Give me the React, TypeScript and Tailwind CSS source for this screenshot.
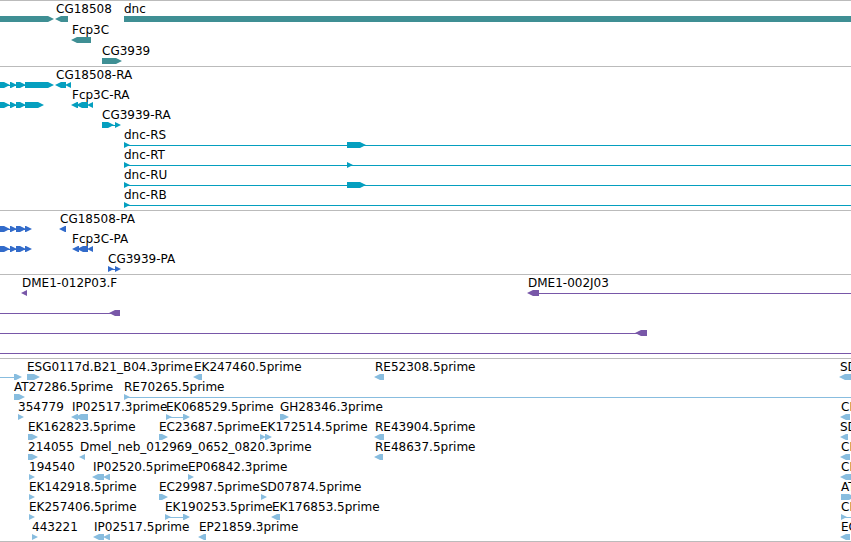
type Glyph = {
  from: number
  to?: number
  kind: 'right' | 'left' | 'line' | 'bar'
}

type Label = { x: number; text: string }

type Row = { labels: Label[]; glyphs: Glyph[] }

type Track = {
  name: string
  color: string
  rowClass: string
  padClass: string
  rows: Row[]
}

const TIP = 6

const right = (from: number, to: number): Glyph => ({ kind: 'right', from, to })
const left = (from: number, to: number): Glyph => ({ kind: 'left', from, to })
const line = (from: number, to?: number): Glyph => ({ kind: 'line', from, to })
const bar = (from: number): Glyph => ({ kind: 'bar', from })
const label = (x: number, text: string): Label => ({ x, text })

const tracks: Track[] = [
  {
    name: 'Genes',
    color: 'text-[#3f8f94]',
    rowClass: 'h-[21px]',
    padClass: 'pb-[2px]',
    rows: [
      {
        labels: [label(56, 'CG18508'), label(124, 'dnc')],
        glyphs: [right(-10, 54), left(55, 68), bar(124)],
      },
      { labels: [label(72, 'Fcp3C')], glyphs: [left(71, 91)] },
      { labels: [label(102, 'CG3939')], glyphs: [right(102, 122)] },
    ],
  },
  {
    name: 'Transcripts',
    color: 'text-[#059fbf]',
    rowClass: 'h-5',
    padClass: 'pb-[3px]',
    rows: [
      {
        labels: [label(56, 'CG18508-RA')],
        glyphs: [right(-4, 10), right(10, 17), right(16, 26), right(25, 54), left(55, 66), left(65, 71), line(0, 50)],
      },
      {
        labels: [label(72, 'Fcp3C-RA')],
        glyphs: [right(-4, 10), right(10, 17), right(16, 26), right(25, 44), left(71, 78), left(76, 88), left(87, 93), line(0, 40)],
      },
      { labels: [label(102, 'CG3939-RA')], glyphs: [right(102, 114), line(112, 117), right(115, 121)] },
      { labels: [label(124, 'dnc-RS')], glyphs: [right(124, 130), line(124), right(347, 366)] },
      { labels: [label(124, 'dnc-RT')], glyphs: [right(124, 130), line(124), right(347, 353)] },
      { labels: [label(124, 'dnc-RU')], glyphs: [right(124, 130), line(124), right(347, 366)] },
      { labels: [label(124, 'dnc-RB')], glyphs: [right(124, 130), line(124)] },
    ],
  },
  {
    name: 'Proteins',
    color: 'text-[#326bca]',
    rowClass: 'h-5',
    padClass: 'pb-[3px]',
    rows: [
      {
        labels: [label(60, 'CG18508-PA')],
        glyphs: [right(-4, 10), right(10, 17), right(16, 26), right(25, 32), line(0, 28), left(59, 66)],
      },
      {
        labels: [label(72, 'Fcp3C-PA')],
        glyphs: [right(-4, 10), right(10, 17), right(16, 26), right(25, 32), line(0, 28), left(72, 79), left(77, 88), left(87, 93)],
      },
      { labels: [label(108, 'CG3939-PA')], glyphs: [right(108, 114), line(112, 117), right(115, 121)] },
    ],
  },
  {
    name: 'Clones',
    color: 'text-[#7857a8]',
    rowClass: 'h-5',
    padClass: 'pb-[3px]',
    rows: [
      {
        labels: [label(22, 'DME1-012P03.F'), label(528, 'DME1-002J03')],
        glyphs: [left(21, 27), left(527, 539), line(539)],
      },
      { labels: [], glyphs: [line(0, 112), left(109, 120)] },
      { labels: [], glyphs: [line(0, 637), left(635, 647)] },
      { labels: [], glyphs: [line(0)] },
    ],
  },
  {
    name: 'ESTs',
    color: 'text-[#88bddf]',
    rowClass: 'h-5',
    padClass: 'pb-[2px]',
    rows: [
      {
        labels: [
          label(27, 'ESG0117d.B21_B04.3prime'),
          label(194, 'EK247460.5prime'),
          label(375, 'RE52308.5prime'),
          label(840, 'SD'),
        ],
        glyphs: [line(0, 17), right(14, 22), right(27, 40), left(193, 202), left(374, 384), left(839, 862)],
      },
      {
        labels: [label(14, 'AT27286.5prime'), label(124, 'RE70265.5prime')],
        glyphs: [right(14, 25), right(124, 130), line(124)],
      },
      {
        labels: [
          label(18, '354779'),
          label(72, 'IP02517.3prime'),
          label(166, 'EK068529.5prime'),
          label(280, 'GH28346.3prime'),
          label(841, 'CK'),
        ],
        glyphs: [right(18, 24), left(71, 78), left(75, 88), right(166, 172), line(168, 185), right(183, 190), right(280, 289), left(840, 850)],
      },
      {
        labels: [
          label(28, 'EK162823.5prime'),
          label(159, 'EC23687.5prime'),
          label(260, 'EK172514.5prime'),
          label(375, 'RE43904.5prime'),
          label(840, 'SD'),
        ],
        glyphs: [right(28, 38), right(159, 168), right(260, 266), right(265, 272), left(374, 384), left(840, 848)],
      },
      {
        labels: [
          label(28, '214055'),
          label(80, 'Dmel_neb_012969_0652_0820.3prime'),
          label(375, 'RE48637.5prime'),
          label(841, 'CK'),
        ],
        glyphs: [right(28, 38), left(79, 85), left(374, 383), left(840, 850)],
      },
      {
        labels: [label(29, '194540'), label(93, 'IP02520.5prime'), label(188, 'EP06842.3prime'), label(841, 'CK')],
        glyphs: [right(29, 35), left(92, 104), left(103, 110), right(188, 194), left(840, 862)],
      },
      {
        labels: [label(29, 'EK142918.5prime'), label(159, 'EC29987.5prime'), label(260, 'SD07874.5prime'), label(841, 'AT')],
        glyphs: [right(29, 35), right(159, 168), right(261, 267), right(841, 855)],
      },
      {
        labels: [label(29, 'EK257406.5prime'), label(165, 'EK190253.5prime'), label(272, 'EK176853.5prime'), label(841, 'CK')],
        glyphs: [right(29, 35), right(165, 171), line(168, 185), right(183, 190), left(271, 280), right(841, 847), line(845)],
      },
      {
        labels: [label(32, '443221'), label(94, 'IP02517.5prime'), label(199, 'EP21859.3prime'), label(841, 'EC')],
        glyphs: [right(32, 38), left(93, 104), left(103, 110), left(198, 206), left(840, 850)],
      },
    ],
  },
]

function FeatureGlyph({ glyph }: { glyph: Glyph }) {
  const { kind, from } = glyph

  if (kind === 'bar') return <rect x={from} y={0} width="100%" height={6} />

  if (kind === 'line') {
    return <rect x={from} y={3} width={glyph.to === undefined ? '100%' : glyph.to - from} height={1} />
  }

  const to = glyph.to ?? from
  const tip = Math.min(TIP, to - from)
  const points =
    kind === 'right'
      ? `${from},0 ${to - tip},0 ${to},3 ${to - tip},6 ${from},6`
      : `${to},0 ${from + tip},0 ${from},3 ${from + tip},6 ${to},6`
  return <polygon points={points} />
}

function TrackRow({ row, className }: { row: Row; className: string }) {
  return (
    <div className={`relative ${className}`}>
      {row.labels.map((item) => (
        <span
          key={item.x}
          className="absolute top-0 text-[12px] leading-4 whitespace-nowrap text-black"
          style={{ left: item.x }}
        >
          {item.text}
        </span>
      ))}
      <svg className="absolute top-[15px] left-0 h-[6px] w-full fill-current" aria-hidden="true">
        {row.glyphs.map((glyph, i) => (
          <FeatureGlyph key={i} glyph={glyph} />
        ))}
      </svg>
    </div>
  )
}

export default function App() {
  return (
    <main className="w-full overflow-hidden border-b border-[#bbbbbb] bg-white font-['DejaVu_Sans','Noto_Sans',sans-serif]">
      {tracks.map((track) => (
        <section
          key={track.name}
          aria-label={track.name}
          className={`border-t border-[#bbbbbb] ${track.color} ${track.padClass}`}
        >
          {track.rows.map((row, i) => (
            <TrackRow key={i} row={row} className={track.rowClass} />
          ))}
        </section>
      ))}
    </main>
  )
}
